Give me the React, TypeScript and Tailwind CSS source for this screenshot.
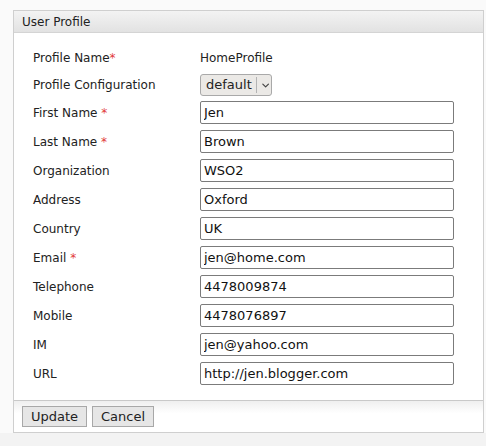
import { ChevronDown } from 'lucide-react';

type Field = { label: string; value: string; required?: boolean };

const fields: Field[] = [
  { label: 'First Name', value: 'Jen', required: true },
  { label: 'Last Name', value: 'Brown', required: true },
  { label: 'Organization', value: 'WSO2' },
  { label: 'Address', value: 'Oxford' },
  { label: 'Country', value: 'UK' },
  { label: 'Email', value: 'jen@home.com', required: true },
  { label: 'Telephone', value: '4478009874' },
  { label: 'Mobile', value: '4478076897' },
  { label: 'IM', value: 'jen@yahoo.com' },
  { label: 'URL', value: 'http://jen.blogger.com' },
];

const font = { fontFamily: '"DejaVu Sans", Verdana, sans-serif' };

function Star() {
  return <span className="text-[#e23a3a]">*</span>;
}

export default function App() {
  return (
    <div className="w-[486px] h-[446px] bg-[#fafafa] text-[#222]" style={font}>
      <div className="pt-[10px] pl-[13px] pr-[2px]">
        <div className="border border-[#cfcfcf] bg-white">
          {/* header */}
          <div className="h-[22px] flex items-center pl-[8px] text-[12px] border-b border-[#d4d4d4] bg-gradient-to-b from-[#f3f3f3] to-[#e2e2e2]">
            User Profile
          </div>

          {/* form */}
          <div className="pl-[19px] pt-[14px] pb-[15px] flex flex-col text-[12px]">
            <div className="flex items-center h-[22px]">
              <div className="w-[167px]">
                Profile Name<Star />
              </div>
              <div>HomeProfile</div>
            </div>
            <div className="flex items-center h-[22px] mt-[5px]">
              <div className="w-[167px]">Profile Configuration</div>
              <div className="w-[72px] h-[22px] flex items-center border border-[#a9a9a9] rounded-[3px] bg-[#ebe9e6] text-[13px]">
                <span className="pl-[5px] pr-[4px]">default</span>
                <span className="h-[16px] border-l border-[#b4b4b4]" />
                <ChevronDown className="w-[13px] h-[13px] ml-[3px] text-[#444]" strokeWidth={2.5} />
              </div>
            </div>
            <div className="flex flex-col gap-[6px] mt-[5px]">
              {fields.map((f) => (
                <div key={f.label} className="flex items-center h-[23px]">
                  <div className="w-[167px]">
                    {f.label}
                    {f.required && (
                      <>
                        {' '}
                        <Star />
                      </>
                    )}
                  </div>
                  <input
                    readOnly
                    value={f.value}
                    className="w-[254px] h-[23px] border border-[#7b7b7b] rounded-[2px] px-[3px] text-[13px] text-[#111] bg-white outline-none"
                    style={font}
                  />
                </div>
              ))}
            </div>
          </div>

          {/* footer */}
          <div className="border-t border-[#c9c9c9] bg-gradient-to-b from-[#efefef] to-white to-40% pl-[8px] py-[5px] flex gap-[5px]">
            <button
              className="w-[65px] h-[21px] border border-[#a8a8a8] bg-[#e6e6e6] text-[13px] text-[#222]"
              style={font}
            >
              Update
            </button>
            <button
              className="w-[62px] h-[21px] border border-[#a8a8a8] bg-[#e6e6e6] text-[13px] text-[#222]"
              style={font}
            >
              Cancel
            </button>
          </div>
        </div>
      </div>
      <div className="h-[13px] bg-[#f3f3f3]" />
    </div>
  );
}
